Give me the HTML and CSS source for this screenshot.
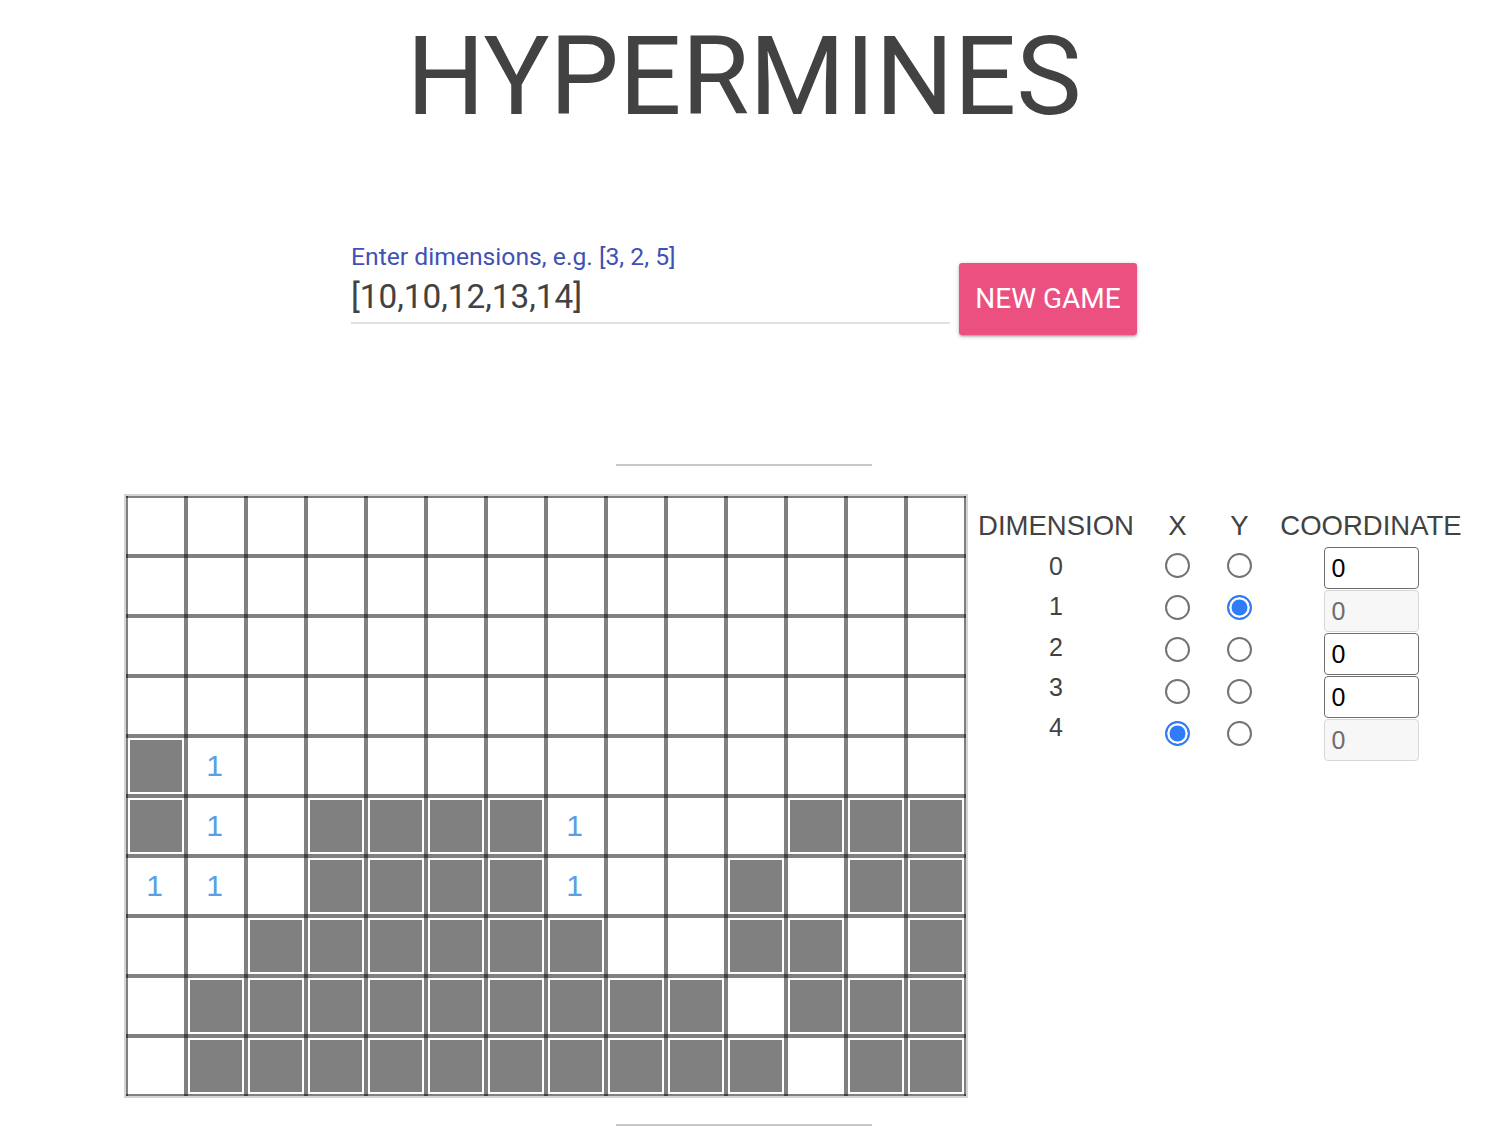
FILE: index.html
```html
<!DOCTYPE html>
<html lang="en">
<head>
<meta charset="utf-8">
<title>Hypermines</title>
<link rel="stylesheet" href="styles.css">
</head>
<body>
<h1 class="title">HYPERMINES</h1>

<div class="new-game">
  <div class="field">
    <label class="field-label" for="dims">Enter dimensions, e.g. [3, 2, 5]</label>
    <input class="field-input" id="dims" type="text" value="[10,10,12,13,14]">
  </div>
  <button class="btn" type="button">NEW GAME</button>
</div>

<div class="divider"></div>

<div class="board">
  <div class="grid">
    <div class="cell"></div><div class="cell"></div><div class="cell"></div><div class="cell"></div><div class="cell"></div><div class="cell"></div><div class="cell"></div><div class="cell"></div><div class="cell"></div><div class="cell"></div><div class="cell"></div><div class="cell"></div><div class="cell"></div><div class="cell"></div>
    <div class="cell"></div><div class="cell"></div><div class="cell"></div><div class="cell"></div><div class="cell"></div><div class="cell"></div><div class="cell"></div><div class="cell"></div><div class="cell"></div><div class="cell"></div><div class="cell"></div><div class="cell"></div><div class="cell"></div><div class="cell"></div>
    <div class="cell"></div><div class="cell"></div><div class="cell"></div><div class="cell"></div><div class="cell"></div><div class="cell"></div><div class="cell"></div><div class="cell"></div><div class="cell"></div><div class="cell"></div><div class="cell"></div><div class="cell"></div><div class="cell"></div><div class="cell"></div>
    <div class="cell"></div><div class="cell"></div><div class="cell"></div><div class="cell"></div><div class="cell"></div><div class="cell"></div><div class="cell"></div><div class="cell"></div><div class="cell"></div><div class="cell"></div><div class="cell"></div><div class="cell"></div><div class="cell"></div><div class="cell"></div>

    <div class="cell covered"></div><div class="cell num">1</div><div class="cell"></div><div class="cell"></div><div class="cell"></div><div class="cell"></div><div class="cell"></div><div class="cell"></div><div class="cell"></div><div class="cell"></div><div class="cell"></div><div class="cell"></div><div class="cell"></div><div class="cell"></div>

    <div class="cell covered"></div><div class="cell num">1</div><div class="cell"></div><div class="cell covered"></div><div class="cell covered"></div><div class="cell covered"></div><div class="cell covered"></div><div class="cell num">1</div><div class="cell"></div><div class="cell"></div><div class="cell"></div><div class="cell covered"></div><div class="cell covered"></div><div class="cell covered"></div>

    <div class="cell num">1</div><div class="cell num">1</div><div class="cell"></div><div class="cell covered"></div><div class="cell covered"></div><div class="cell covered"></div><div class="cell covered"></div><div class="cell num">1</div><div class="cell"></div><div class="cell"></div><div class="cell covered"></div><div class="cell"></div><div class="cell covered"></div><div class="cell covered"></div>

    <div class="cell"></div><div class="cell"></div><div class="cell covered"></div><div class="cell covered"></div><div class="cell covered"></div><div class="cell covered"></div><div class="cell covered"></div><div class="cell covered"></div><div class="cell"></div><div class="cell"></div><div class="cell covered"></div><div class="cell covered"></div><div class="cell"></div><div class="cell covered"></div>

    <div class="cell"></div><div class="cell covered"></div><div class="cell covered"></div><div class="cell covered"></div><div class="cell covered"></div><div class="cell covered"></div><div class="cell covered"></div><div class="cell covered"></div><div class="cell covered"></div><div class="cell covered"></div><div class="cell"></div><div class="cell covered"></div><div class="cell covered"></div><div class="cell covered"></div>

    <div class="cell"></div><div class="cell covered"></div><div class="cell covered"></div><div class="cell covered"></div><div class="cell covered"></div><div class="cell covered"></div><div class="cell covered"></div><div class="cell covered"></div><div class="cell covered"></div><div class="cell covered"></div><div class="cell covered"></div><div class="cell"></div><div class="cell covered"></div><div class="cell covered"></div>
  </div>

  <div class="controls">
    <div class="head">DIMENSION</div>
    <div class="head">X</div>
    <div class="head">Y</div>
    <div class="head">COORDINATE</div>

    <div class="stack dims">
      <div>0</div><div>1</div><div>2</div><div>3</div><div>4</div>
    </div>
    <div class="stack radios">
      <span class="radio-cell"><input class="radio" type="radio" name="axis-x"></span>
      <span class="radio-cell"><input class="radio" type="radio" name="axis-x"></span>
      <span class="radio-cell"><input class="radio" type="radio" name="axis-x"></span>
      <span class="radio-cell"><input class="radio" type="radio" name="axis-x"></span>
      <span class="radio-cell"><input class="radio" type="radio" name="axis-x" checked></span>
    </div>
    <div class="stack radios">
      <span class="radio-cell"><input class="radio" type="radio" name="axis-y"></span>
      <span class="radio-cell"><input class="radio" type="radio" name="axis-y" checked></span>
      <span class="radio-cell"><input class="radio" type="radio" name="axis-y"></span>
      <span class="radio-cell"><input class="radio" type="radio" name="axis-y"></span>
      <span class="radio-cell"><input class="radio" type="radio" name="axis-y"></span>
    </div>
    <div class="stack coords">
      <input class="coord" type="text" value="0">
      <input class="coord" type="text" value="0" disabled>
      <input class="coord" type="text" value="0">
      <input class="coord" type="text" value="0">
      <input class="coord" type="text" value="0" disabled>
    </div>
  </div>
</div>

<div class="divider divider-bottom"></div>
</body>
</html>
```

FILE: styles.css
```css
html, body {
  margin: 0;
  padding: 0;
  background: #fff;
}

body {
  font-family: Roboto, "Liberation Sans", sans-serif;
  color: #424242;
}

.title {
  margin: 22px 0 0;
  font-family: Roboto, sans-serif;
  font-weight: 400;
  font-size: 110px;
  line-height: 110px;
  text-align: center;
  color: #424242;
}

.new-game {
  display: flex;
  justify-content: center;
  align-items: flex-start;
  gap: 9px;
  margin-top: 111px;
}

.field {
  display: flex;
  flex-direction: column;
  width: 599px;
}

.field-label {
  font-family: Roboto, sans-serif;
  font-size: 24.7px;
  line-height: 28px;
  color: #3f51b5;
}

.field-input {
  box-sizing: border-box;
  margin-top: 4px;
  width: 100%;
  height: 49px;
  padding: 0 0 5px;
  border: none;
  border-bottom: 2px solid #e0e0e0;
  outline: none;
  background: transparent;
  font-family: Roboto, sans-serif;
  font-size: 33.3px;
  color: #424242;
}

.btn {
  margin-top: 20px;
  width: 178px;
  height: 72px;
  padding: 0;
  border: none;
  border-radius: 3px;
  background: #ec5080;
  color: #fff;
  font-family: Roboto, sans-serif;
  font-size: 28px;
  line-height: 72px;
  box-shadow: 0 2px 2px 0 rgba(0,0,0,.14), 0 3px 1px -2px rgba(0,0,0,.12), 0 1px 5px 0 rgba(0,0,0,.2);
}

.divider {
  width: 256px;
  height: 2px;
  margin: 129px auto 0;
  background: #c8c8c8;
}

.divider-bottom {
  margin-top: 26px;
}

.board {
  display: flex;
  align-items: flex-start;
  gap: 9px;
  margin-top: 28px;
  padding-left: 124px;
}

.grid {
  display: grid;
  grid-template-columns: repeat(14, 56px);
  grid-auto-rows: 56px;
  gap: 4px;
  padding: 2px;
  border: 2px solid #cfd5d9;
  background-color: #fff;
  background-image:
    linear-gradient(to right, #808080 0 2px, #fff 2px 58px, #808080 58px 60px),
    linear-gradient(to bottom, #808080 0 2px, #fff 2px 58px, #808080 58px 60px);
  background-size: 60px 100%, 100% 60px;
  background-blend-mode: multiply;
}

.cell {
  background: #fff;
}

.cell.covered {
  background: #808080;
  box-shadow: inset 0 0 0 2px #fff;
}

.cell.num {
  box-sizing: border-box;
  padding-right: 3px;
  font-family: "Liberation Sans", sans-serif;
  font-size: 30px;
  line-height: 56px;
  text-align: center;
  color: #5a9fe3;
}

.controls {
  display: grid;
  grid-template-columns: 158px 85px 39px 224px;
  margin-top: 17px;
  font-family: "Liberation Sans", sans-serif;
  color: #424242;
}

.head {
  font-size: 27.5px;
  line-height: 30px;
  text-align: center;
  white-space: nowrap;
}

.stack {
  display: flex;
  flex-direction: column;
  align-items: center;
}

.dims {
  padding-top: 5px;
  font-size: 25px;
  line-height: 40.3px;
}

.radios {
  padding-top: 3px;
}

.radio-cell {
  display: flex;
  align-items: center;
  justify-content: center;
  height: 42px;
}

.radio {
  -webkit-appearance: none;
  appearance: none;
  box-sizing: border-box;
  width: 25px;
  height: 25px;
  margin: 0;
  border: 2px solid #737373;
  border-radius: 50%;
  background: #fff;
}

.radio:checked {
  border-color: #2f7cf6;
  background: #2f7cf6;
  box-shadow: inset 0 0 0 2.5px #fff;
}

.coords {
  padding-top: 6px;
  gap: 1px;
}

.coord {
  box-sizing: border-box;
  width: 95px;
  height: 42px;
  margin: 0;
  padding: 0 7px;
  border: 1px solid #6e6e6e;
  border-radius: 4px;
  background: #fff;
  font-family: "Liberation Sans", sans-serif;
  font-size: 25px;
  color: #000;
  outline: none;
}

.coord:disabled {
  border-color: #d7d7d7;
  background: #f7f7f7;
  color: #6d6d6d;
}
```
